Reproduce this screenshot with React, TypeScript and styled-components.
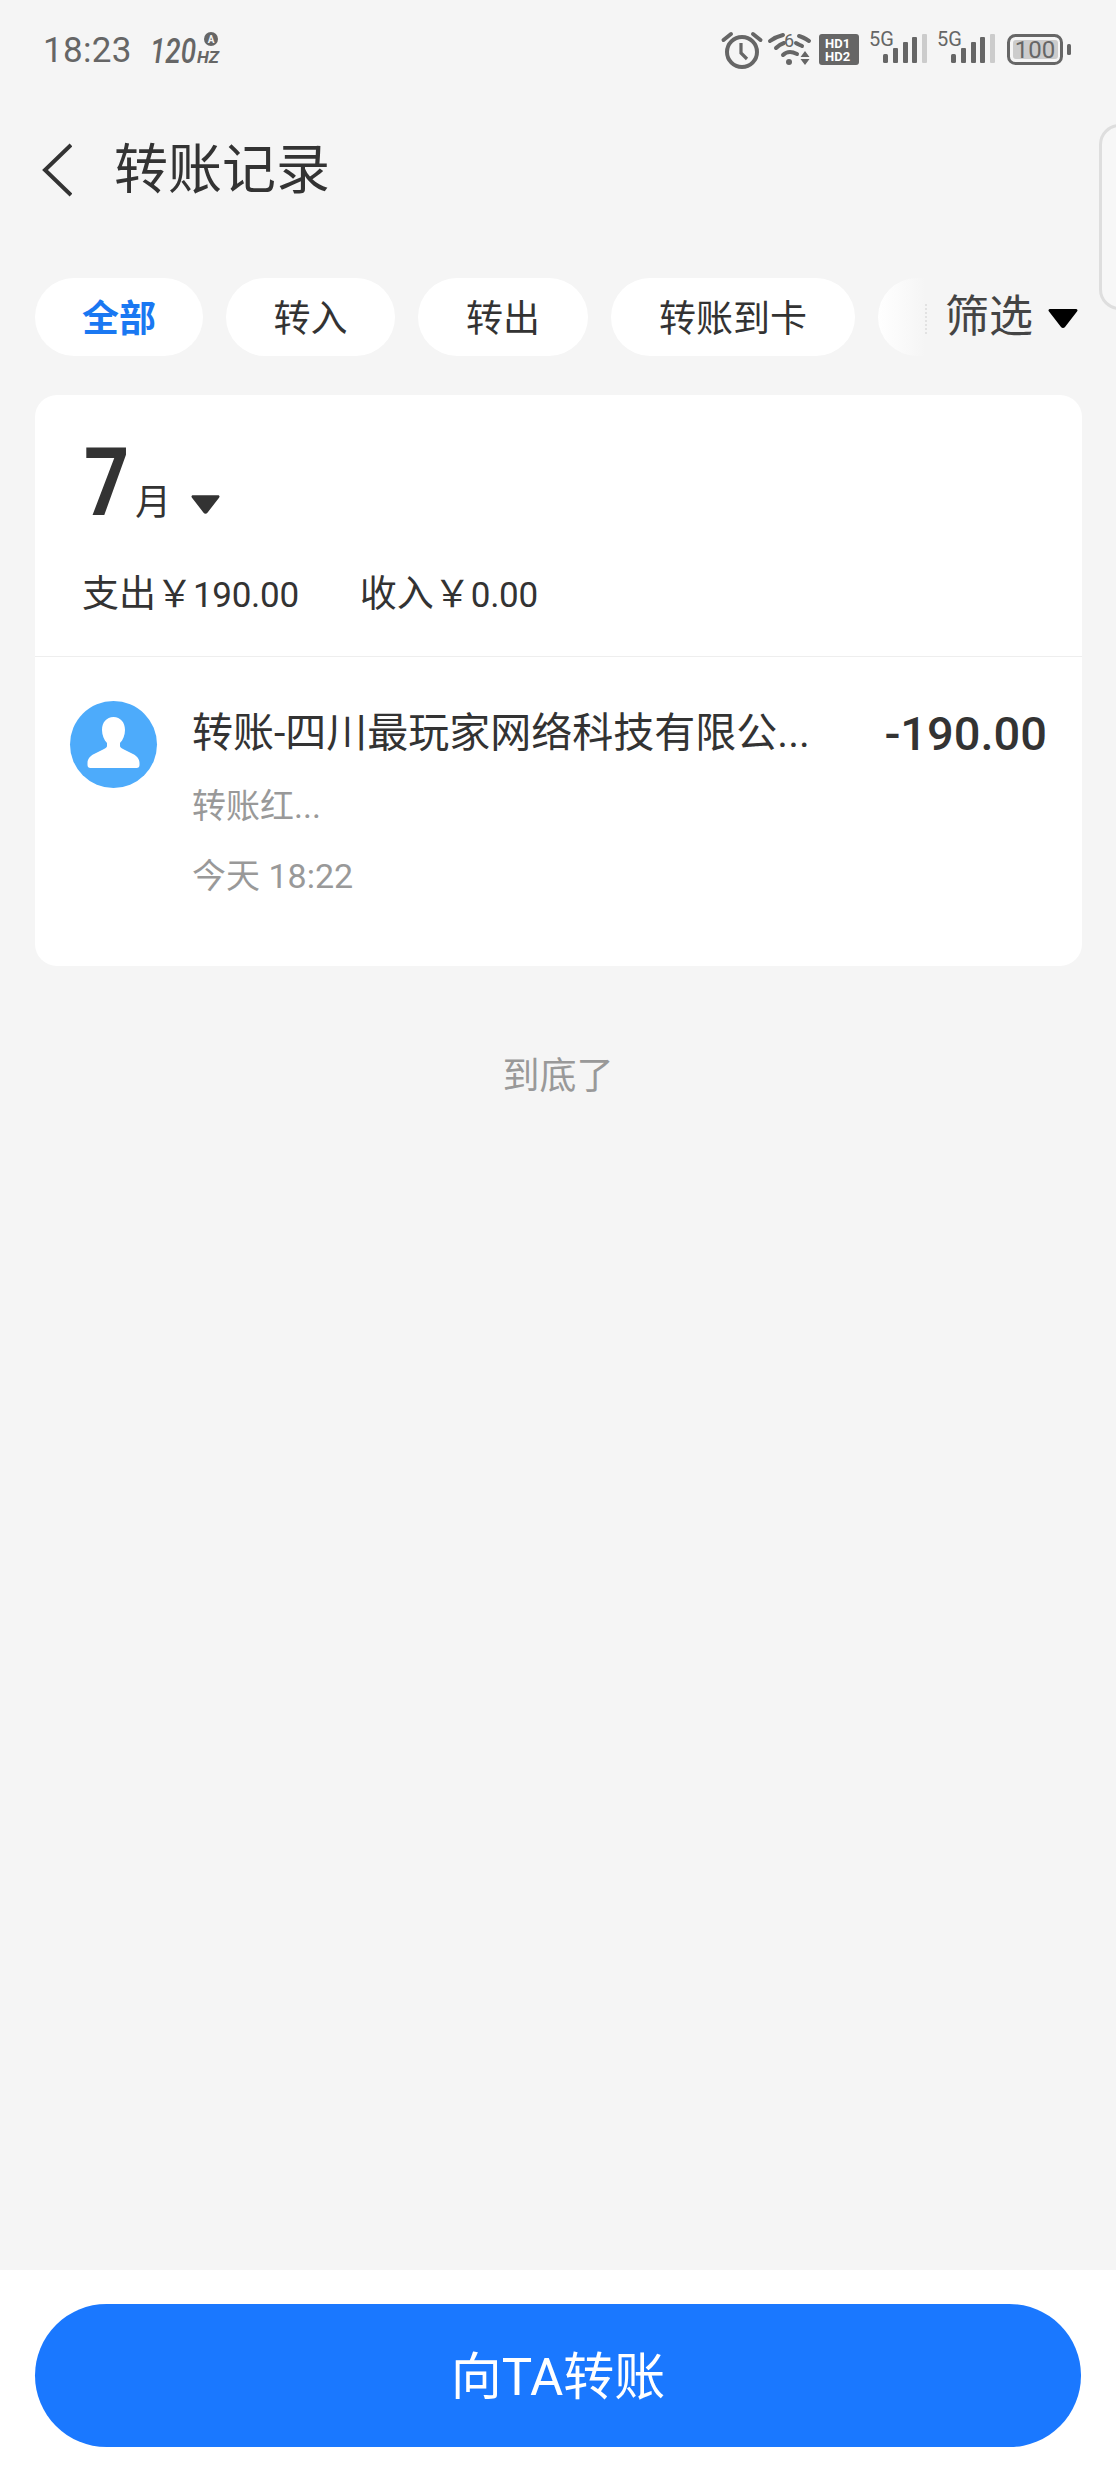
import React from 'react';
import styled, { createGlobalStyle } from 'styled-components';

const GlobalStyle = createGlobalStyle`
    html, body {
        margin: 0;
        padding: 0;
        background: #f5f5f5;
    }
    * {
        box-sizing: border-box;
    }
`;

const Page = styled.div`
    position: relative;
    display: flex;
    flex-direction: column;
    width: 1116px;
    height: 2480px;
    overflow: hidden;
    background: #f5f5f5;
    color: #333;
    font-family: Roboto, "Noto Sans CJK SC", sans-serif;
`;

const StatusBar = styled.div`
    display: flex;
    align-items: flex-start;
    height: 96px;
    padding: 30px 45px 0 43px;
    color: #666;
`;

const Clock = styled.span`
    margin-top: 1px;
    font-size: 35px;
    line-height: 40px;
    letter-spacing: 0.3px;
`;

const RefreshRate = styled.svg`
    margin-left: 18px;
    margin-top: 2px;
    overflow: visible;
`;

const StatusIcons = styled.div`
    display: flex;
    align-items: flex-start;
    margin-left: auto;
`;

const StatusSvg = styled.svg<{ $top: number; $left?: number }>`
    flex: none;
    margin-top: ${(p) => p.$top}px;
    margin-left: ${(p) => p.$left ?? 0}px;
    overflow: visible;
`;

const Header = styled.div`
    display: flex;
    align-items: center;
    height: 148px;
    padding-left: 42px;
`;

const BackIcon = styled.svg`
    flex: none;
`;

const Title = styled.h1`
    margin: 2px 0 0 42px;
    font-size: 54px;
    font-weight: 400;
    line-height: 60px;
    color: #333;
`;

const EdgeHandle = styled.div`
    position: absolute;
    z-index: 2;
    top: 124px;
    right: -24px;
    width: 41px;
    height: 186px;
    border: 3px solid #dedede;
    border-radius: 24px;
    background: #f7f7f7;
`;

const TabStrip = styled.div`
    position: relative;
    display: flex;
    gap: 23px;
    height: 78px;
    margin-top: 34px;
    padding-left: 35px;
    overflow: hidden;
`;

const Tab = styled.div<{ $active?: boolean; $width: number }>`
    flex: none;
    display: flex;
    align-items: center;
    justify-content: center;
    width: ${(p) => p.$width}px;
    height: 78px;
    padding-bottom: 2px;
    border-radius: 39px;
    background: #fff;
    font-size: 37px;
    font-weight: ${(p) => (p.$active ? 700 : 400)};
    color: ${(p) => (p.$active ? '#1a78f2' : '#333')};
`;

const FilterFade = styled.div`
    position: absolute;
    top: 0;
    right: 0;
    bottom: 0;
    display: flex;
    align-items: center;
    width: 239px;
    padding-left: 68px;
    background: linear-gradient(to right, rgba(245, 245, 245, 0) 0, #f5f5f5 48px);

    &::before {
        content: '';
        position: absolute;
        left: 48px;
        top: 26px;
        height: 30px;
        border-left: 2px dotted #e2e2e2;
    }
`;

const FilterLabel = styled.span`
    font-size: 44px;
    line-height: 50px;
    color: #444;
`;

const FilterCaret = styled.svg`
    margin-left: 15px;
    margin-top: 2px;
`;

const Card = styled.section`
    margin: 39px 34px 0 35px;
    height: 571px;
    border-radius: 22px;
    background: #fff;
`;

const Summary = styled.div`
    height: 262px;
    padding: 42px 0 0 47px;
    border-bottom: 1px solid #eeeeee;
`;

const MonthRow = styled.div`
    display: flex;
    align-items: baseline;
    height: 90px;
`;

const MonthNumber = styled.span`
    display: inline-block;
    margin-left: 2px;
    font-size: 94px;
    font-weight: 700;
    line-height: 92px;
    color: #333;
    transform: scaleX(0.84);
    transform-origin: left center;
`;

const MonthUnit = styled.span`
    margin-left: -3px;
    font-size: 36px;
    line-height: 40px;
    color: #333;
`;

const MonthCaret = styled.svg`
    margin-left: 20px;
`;

const Totals = styled.div`
    display: flex;
    gap: 61px;
    margin-top: 46px;
    line-height: 44px;
    color: #333;
`;

const TotalLabel = styled.span`
    font-size: 37px;
`;

const TotalFigure = styled.span`
    font-size: 35px;
    letter-spacing: -0.3px;
`;

const Record = styled.div`
    display: flex;
    align-items: flex-start;
    padding: 44px 35px 0;
`;

const Avatar = styled.div`
    flex: none;
    display: flex;
    width: 87px;
    height: 87px;
    border-radius: 50%;
    background: #4dabfb;
`;

const RecordBody = styled.div`
    flex: 1;
    min-width: 0;
    margin-left: 35px;
`;

const RecordTop = styled.div`
    display: flex;
    align-items: flex-start;
    justify-content: space-between;
`;

const RecordName = styled.span`
    font-size: 41px;
    line-height: 50px;
    margin-top: 7px;
    white-space: nowrap;
    color: #333;
`;

const Amount = styled.span`
    font-size: 47px;
    font-weight: 500;
    line-height: 56px;
    margin-top: 5px;
    color: #333;
`;

const RecordNote = styled.div`
    margin-top: 24px;
    font-size: 34px;
    line-height: 40px;
    color: #999;
`;

const RecordTime = styled.div`
    margin-top: 30px;
    font-size: 34px;
    line-height: 40px;
    color: #999;
`;

const EndNote = styled.div`
    margin-top: 86px;
    text-align: center;
    font-size: 37px;
    line-height: 50px;
    color: #999;
`;

const BottomBar = styled.div`
    margin-top: auto;
    height: 210px;
    padding: 34px 35px 0;
    background: #fff;
`;

const TransferButton = styled.button`
    display: block;
    width: 100%;
    height: 143px;
    padding: 0 0 6px;
    border: 0;
    border-radius: 72px;
    background: #1a78ff;
    color: #fff;
    font-family: inherit;
    font-size: 51px;
    font-weight: 400;
`;

const AlarmIcon = () => (
    <StatusSvg $top={1} width="40" height="38" viewBox="0 0 40 38" fill="none" stroke="currentColor">
        <circle cx="20" cy="21" r="15" strokeWidth="4" />
        <path d="M19 12v10l6 6" strokeWidth="3.2" />
        <path d="M1.500 9 9 3M38.500 9 31 3" strokeWidth="4" strokeLinecap="round" />
    </StatusSvg>
);

const WifiIcon = () => (
    <StatusSvg $top={0} $left={6} width="43" height="38" viewBox="0 0 43 38" fill="none" stroke="currentColor" strokeWidth="4" strokeLinecap="round">
        <path d="M2 11C6 8 11 6 15 5M31 6C35 7 38 9 41 11" />
        <path d="M8 18C10 16 13 14 16 13M28 13C29 14 32 15 34 16" />
        <path d="M15 25C17 23 20 22 22 22C25 22 27 23 29 24" />
        <circle cx="21" cy="32" r="3" fill="currentColor" stroke="none" />
        <path d="M37 21l-4.500 6h9zM37 35l-4.500-6h9z" fill="currentColor" stroke="none" />
        <text x="16" y="17" fontFamily="Roboto, sans-serif" fontSize="18" fill="currentColor" stroke="none">6</text>
    </StatusSvg>
);

const HdIcon = () => (
    <StatusSvg $top={4} $left={8} width="40" height="32" viewBox="0 0 40 32">
        <rect width="40" height="31" rx="3" fill="currentColor" />
        <text x="6" y="14" fontFamily="Roboto, sans-serif" fontWeight="700" fontSize="13" fill="#fff">HD1</text>
        <text x="6" y="27" fontFamily="Roboto, sans-serif" fontWeight="700" fontSize="13" fill="#fff">HD2</text>
    </StatusSvg>
);

const SignalIcon = () => (
    <StatusSvg $top={1} $left={10} width="58" height="34" viewBox="0 0 58 34">
        <text x="0" y="15" fontFamily="Roboto, sans-serif" fontSize="20" fill="currentColor">5G</text>
        <rect x="14" y="23" width="5" height="9" rx="1.500" fill="currentColor" />
        <rect x="24" y="17" width="5" height="15" rx="1" fill="currentColor" />
        <rect x="34" y="11" width="5" height="21" rx="1" fill="currentColor" />
        <rect x="43" y="6" width="5" height="26" rx="1" fill="currentColor" />
        <rect x="53" y="3" width="5" height="29" rx="1" fill="#ccc" />
    </StatusSvg>
);

const BatteryIcon = () => (
    <StatusSvg $top={4} $left={12} width="64" height="32" viewBox="0 0 64 32">
        <rect x="1.500" y="1.500" width="53" height="28" rx="7" fill="none" stroke="currentColor" strokeWidth="3" />
        <rect x="6" y="6" width="45" height="19" rx="3" fill="#ccc" />
        <text x="28" y="24" textAnchor="middle" fontFamily="Roboto, sans-serif" fontSize="24" fill="currentColor">100</text>
        <rect x="60" y="10" width="4" height="11" rx="1.500" fill="currentColor" />
    </StatusSvg>
);

const tabs = [
    { label: '全部', width: 168, active: true },
    { label: '转入', width: 169 },
    { label: '转出', width: 170 },
    { label: '转账到卡', width: 244 },
    { label: '', width: 170 },
];

export default function App() {
    return (
        <Page>
            <GlobalStyle />
            <StatusBar>
                <Clock>18:23</Clock>
                <RefreshRate width="70" height="34" viewBox="0 0 70 34">
                    <text x="0" y="31" textLength="46" lengthAdjust="spacingAndGlyphs" fontFamily="Roboto, sans-serif" fontStyle="italic" fontWeight="500" fontSize="35" fill="currentColor">120</text>
                    <text x="47" y="31" textLength="22" lengthAdjust="spacingAndGlyphs" fontFamily="Roboto, sans-serif" fontStyle="italic" fontWeight="700" fontSize="17" fill="currentColor">HZ</text>
                    <circle cx="61" cy="7" r="7" fill="currentColor" />
                    <text x="61" y="11" textAnchor="middle" fontFamily="Roboto, sans-serif" fontWeight="700" fontSize="10" fill="#f5f5f5">A</text>
                </RefreshRate>
                <StatusIcons>
                    <AlarmIcon />
                    <WifiIcon />
                    <HdIcon />
                    <SignalIcon />
                    <SignalIcon />
                    <BatteryIcon />
                </StatusIcons>
            </StatusBar>

            <Header>
                <BackIcon width="30" height="54" viewBox="0 0 30 54" fill="none" stroke="#333" strokeWidth="4">
                    <path d="M29 2 3 27l26 25" />
                </BackIcon>
                <Title>转账记录</Title>
            </Header>

            <EdgeHandle />

            <TabStrip>
                {tabs.map((tab, i) => (
                    <Tab key={i} $active={tab.active} $width={tab.width}>
                        {tab.label}
                    </Tab>
                ))}
                <FilterFade>
                    <FilterLabel>筛选</FilterLabel>
                    <FilterCaret width="30" height="21" viewBox="0 0 30 21">
                        <path d="M2 1h26c1.500 0 2 1.500 1 2.500L17 19c-1 1.300-3 1.300-4 0L1 3.500C0 2.500.5 1 2 1z" fill="#000" />
                    </FilterCaret>
                </FilterFade>
            </TabStrip>

            <Card>
                <Summary>
                    <MonthRow>
                        <MonthNumber>7</MonthNumber>
                        <MonthUnit>月</MonthUnit>
                        <MonthCaret width="29" height="21" viewBox="0 0 30 21">
                            <path d="M2 1h26c1.500 0 2 1.500 1 2.500L17 19c-1 1.300-3 1.300-4 0L1 3.500C0 2.500.5 1 2 1z" fill="#333" />
                        </MonthCaret>
                    </MonthRow>
                    <Totals>
                        <span>
                            <TotalLabel>支出￥</TotalLabel>
                            <TotalFigure>190.00</TotalFigure>
                        </span>
                        <span>
                            <TotalLabel>收入￥</TotalLabel>
                            <TotalFigure>0.00</TotalFigure>
                        </span>
                    </Totals>
                </Summary>
                <Record>
                    <Avatar>
                        <svg width="87" height="87" viewBox="0 0 87 87">
                            <path
                                d="M43.500 16c-7 0-11.500 5.500-11.500 13 0 5 2 10 5 13v3c0 1-1 2-3 3l-10 5c-4 2-6.500 5-6.500 9v2c0 2 1 3 3 3h46c2 0 3-1 3-3v-2c0-4-2.500-7-6.500-9l-10-5c-2-1-3-2-3-3v-3c3-3 5-8 5-13 0-7.500-4.500-13-11.500-13z"
                                fill="#fff"
                            />
                        </svg>
                    </Avatar>
                    <RecordBody>
                        <RecordTop>
                            <RecordName>转账-四川最玩家网络科技有限公...</RecordName>
                            <Amount>-190.00</Amount>
                        </RecordTop>
                        <RecordNote>转账红...</RecordNote>
                        <RecordTime>今天 18:22</RecordTime>
                    </RecordBody>
                </Record>
            </Card>

            <EndNote>到底了</EndNote>

            <BottomBar>
                <TransferButton>向TA转账</TransferButton>
            </BottomBar>
        </Page>
    );
}
